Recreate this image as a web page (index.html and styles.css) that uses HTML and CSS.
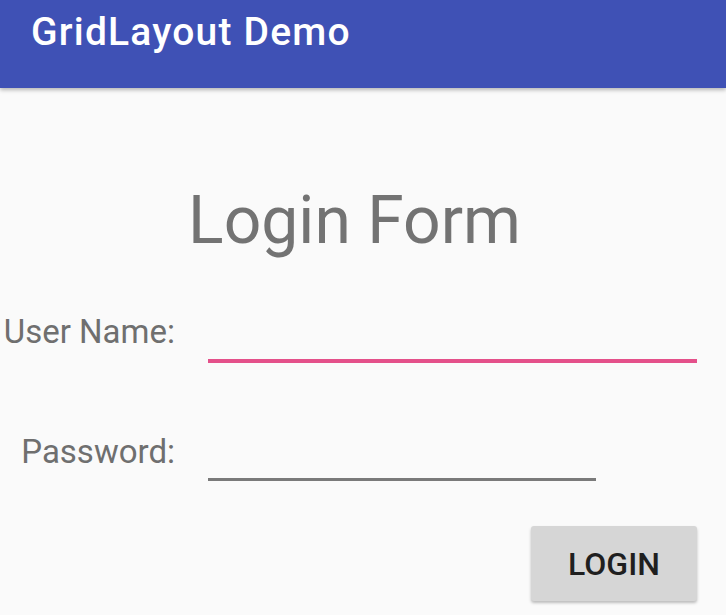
FILE: index.html
```html
<!DOCTYPE html>
<html>
<head>
<meta charset="utf-8">
<link rel="stylesheet" href="styles.css">
</head>
<body>
<header class="appbar">
  <h1 class="appbar-title">GridLayout Demo</h1>
</header>
<main class="form">
  <h2 class="form-title">Login Form</h2>
  <label class="label row1" for="user">User Name:</label>
  <div class="field row1"><input id="user" class="input input-focused" type="text"></div>
  <label class="label row2" for="pass">Password:</label>
  <div class="field row2"><input id="pass" class="input input-short" type="password"></div>
  <div class="actions"><button class="btn" type="button">LOGIN</button></div>
</main>
</body>
</html>
```
FILE: styles.css
```css
html, body {
  margin: 0;
  padding: 0;
  background: #fafafa;
  font-family: Roboto, "Noto Sans", sans-serif;
}
body {
  width: 726px;
  height: 615px;
  overflow: hidden;
}
.appbar {
  height: 88px;
  background: #3f51b5;
  box-shadow: 0 2px 4px rgba(0, 0, 0, 0.28);
  display: flex;
  align-items: flex-start;
  padding-left: 31px;
  position: relative;
  z-index: 1;
}
.appbar-title {
  margin: 0;
  color: #fff;
  font-weight: 500;
  font-size: 39px;
  letter-spacing: 1.2px;
  line-height: 44px;
  padding-top: 10px;
}
.form {
  display: grid;
  grid-template-columns: 176px 1fr;
  column-gap: 32px;
  padding-right: 29px;
}
.form-title {
  grid-column: 1 / 3;
  margin: 94px 0 0 0;
  padding-left: 12px;
  text-align: center;
  font-weight: 400;
  font-size: 66px;
  line-height: 78px;
  color: #737373;
}
.label {
  text-align: right;
  font-size: 33px;
  line-height: 40px;
  color: #6f6f6f;
  padding-right: 1px;
}
.row1 { margin-top: 52px; }
.row2 { margin-top: 69px; }
.field {
  display: flex;
}
.input {
  box-sizing: border-box;
  border: none;
  background: transparent;
  outline: none;
  padding: 0;
  font-family: inherit;
  font-size: 32px;
}
.input-focused {
  width: 100%;
  height: 51px;
  border-bottom: 4px solid #e4508a;
}
.input-short {
  width: 388px;
  height: 49px;
  border-bottom: 3px solid #7a7a7a;
}
.actions {
  grid-column: 2;
  display: flex;
  justify-content: flex-end;
  margin-top: 45px;
}
.btn {
  width: 166px;
  height: 75px;
  background: #d6d6d6;
  border: none;
  border-radius: 3px;
  box-shadow: 0 2px 3px rgba(0, 0, 0, 0.25);
  font-family: inherit;
  font-weight: 500;
  font-size: 32px;
  color: #1f1f1f;
  padding: 0;
}
```
